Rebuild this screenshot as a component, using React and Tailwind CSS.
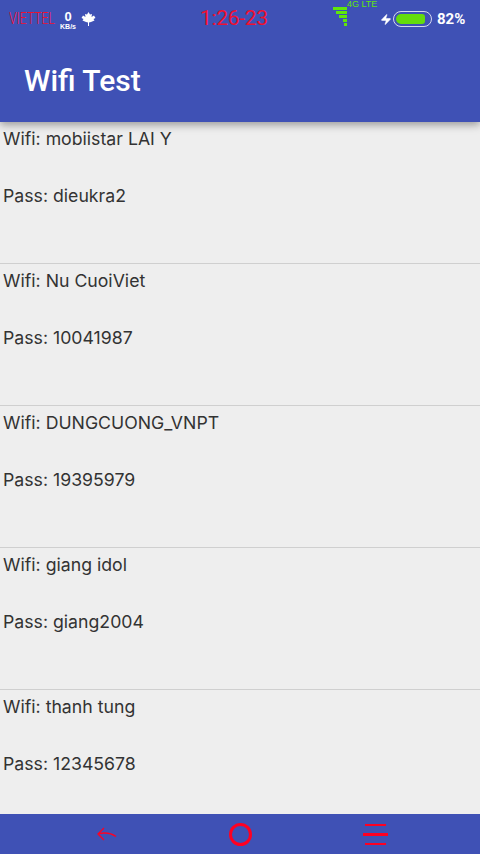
import { Zap } from 'lucide-react';

const networks = [
  { ssid: 'mobiistar LAI Y', pass: 'dieukra2' },
  { ssid: 'Nu CuoiViet', pass: '10041987' },
  { ssid: 'DUNGCUONG_VNPT', pass: '19395979' },
  { ssid: 'giang idol', pass: 'giang2004' },
  { ssid: 'thanh tung', pass: '12345678' },
];

function Signal() {
  return (
    <svg width="16" height="20" viewBox="0 0 16 20" className="text-[#5fe60a]" fill="currentColor">
      <rect x="0" y="0" width="14" height="3" />
      <rect x="3" y="4" width="11" height="3" />
      <rect x="6" y="8" width="8" height="3" />
      <rect x="10" y="12" width="4" height="3" />
      <rect x="11" y="16" width="3" height="3" />
    </svg>
  );
}

function Leaf() {
  return (
    <svg width="15" height="14" viewBox="0 0 15 14" fill="#fff">
      <path d="M7.5 0 L9 2.5 L11 2 L10.5 5 L13 3.5 L14.5 6 L12.5 7 L13.5 8.5 L10 10 L8 10.5 L8 14 L7 14 L7 10.5 L5 10 L1.5 8.5 L2.5 7 L0.5 6 L2 3.5 L4.5 5 L4 2 L6 2.5 Z" />
    </svg>
  );
}

export default function App() {
  return (
    <div className="w-[480px] h-[854px] flex flex-col bg-[#eeeeee] overflow-hidden font-['Inter',sans-serif]">
      <header className="relative z-10 h-[122px] shrink-0 bg-[#3f51b5] shadow-[0_3px_8px_rgba(0,0,0,0.35)] flex flex-col">
        <div className="h-[38px] shrink-0 flex items-center pl-[9px] text-white font-['Liberation_Sans',sans-serif]">
          <span className="w-[48px] text-[#f01030] text-[17px] font-['Roboto',sans-serif] font-light scale-x-[0.72] origin-left whitespace-nowrap">VIETTEL</span>
          <div className="flex flex-col items-center w-[20px] ml-[1px] mt-[2px]">
            <span className="text-[13px] leading-[13px] font-bold">0</span>
            <span className="text-[7px] leading-[8px] font-bold">KB/s</span>
          </div>
          <div className="ml-[3px]"><Leaf /></div>
          <span className="ml-[104px] w-[70px] text-[#f01030] text-[21px] font-['Roboto',sans-serif] tracking-[-0.3px] whitespace-nowrap">1:26-23</span>
          <div className="relative ml-[63px] w-[46px] h-[20px] mt-[-4px]">
            <Signal />
            <span className="absolute left-[14px] top-[-8px] text-[9px] leading-[10px] text-[#5fe60a] whitespace-nowrap">4G LTE</span>
          </div>
          <Zap className="ml-[1px] w-[12px] h-[15px] text-white fill-white" strokeWidth={1} />
          <div className="ml-[1px] w-[39px] h-[16px] rounded-full border-[1.5px] border-[#d5d8ee] p-[2px]">
            <div className="h-full w-[29px] rounded-l-[5px] rounded-r-[3px] bg-[#64dc0c]"></div>
          </div>
          <span className="ml-[5px] text-[15px] font-bold font-['Roboto',sans-serif] whitespace-nowrap">82%</span>
        </div>
        <h1 className="pl-[24px] mt-[25px] text-[30px] leading-[36px] font-medium text-white font-['Roboto',sans-serif]">Wifi Test</h1>
      </header>

      <main className="flex-1 overflow-hidden">
        {networks.map((n) => (
          <div key={n.ssid} className="h-[142px] border-b border-[#cfcfcf] pl-[3px] pt-[3px] text-[17.7px] leading-[28.5px] text-[#333333] whitespace-pre">
            <div>Wifi: {n.ssid}</div>
            <div className="mt-[28.5px]">Pass: {n.pass}</div>
          </div>
        ))}
      </main>

      <nav className="h-[40px] shrink-0 bg-[#3f51b5] flex items-center justify-between pl-[97px] pr-[92px]">
        <svg width="20" height="14" viewBox="0 0 20 14" fill="none" stroke="#ff0022" strokeWidth="1.3">
          <path d="M7 1 L1 7 L7 13 M1 7 C8 5 14 6 19 9.5" />
        </svg>
        <div className="w-[23px] h-[23px] rounded-full border-[3px] border-[#ff0022]"></div>
        <div className="flex flex-col items-center gap-[7px] w-[25px]">
          <div className="w-[21px] h-[2px] bg-[#ff0022]"></div>
          <div className="w-[25px] h-[3px] bg-[#ff0022]"></div>
          <div className="w-[21px] h-[2px] bg-[#ff0022]"></div>
        </div>
      </nav>
    </div>
  );
}
